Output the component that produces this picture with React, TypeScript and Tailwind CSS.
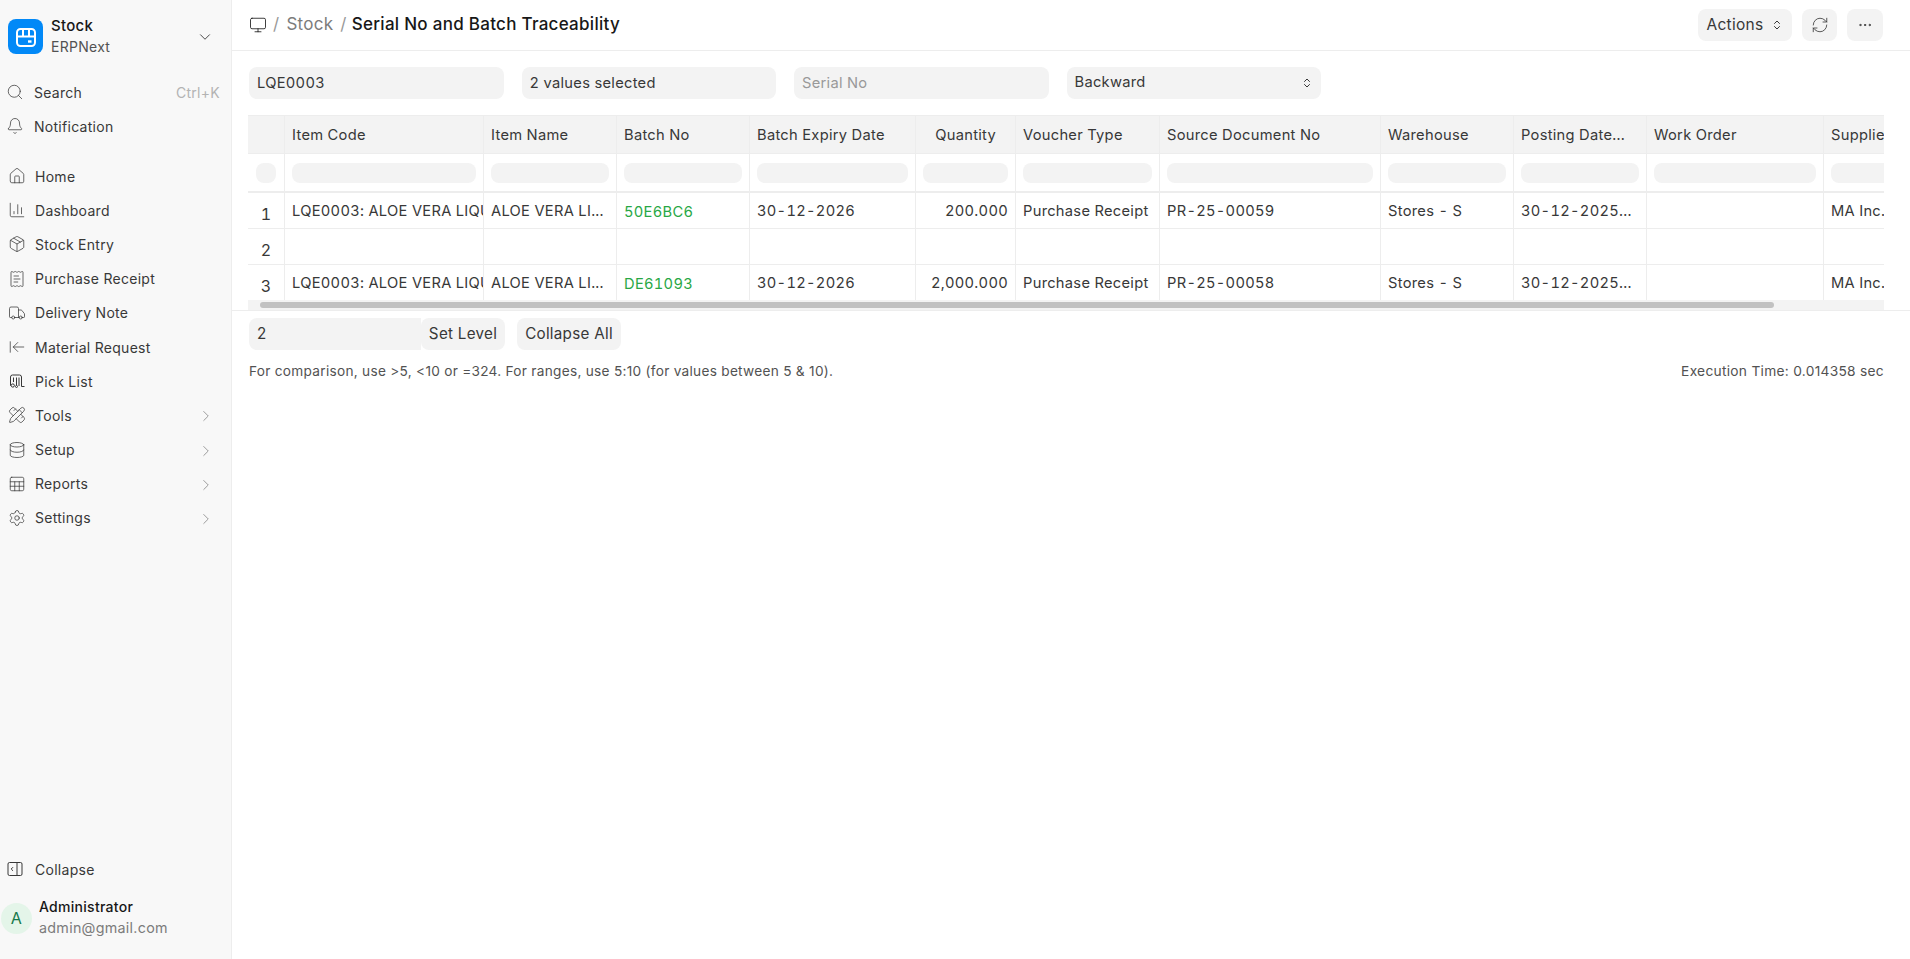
import React from "react";
import { Search, Bell, Home, ChartColumn, Package, ReceiptText, Truck, ArrowLeftToLine, PencilRuler, Database, Sheet, Settings, ChevronDown, ChevronRight, Monitor, RefreshCw, Ellipsis, ChevronsUpDown } from "lucide-react";

const F = "font-['Inter',sans-serif]";

function PickIcon() {
  return (
    <svg width="18" height="18" viewBox="0 0 18 18" fill="none" stroke="currentColor" strokeWidth="1">
      <path d="M3 13.5H2.5V5a2 2 0 0 1 2-2h7a2 2 0 0 1 2 2v9.5h3" />
      <path d="M5.5 5.5v4.5M8.5 5.5v8M11 5.5v8.5" />
      <circle cx="4.8" cy="13.5" r="1.6" />
      <circle cx="8.5" cy="14.5" r="1" />
    </svg>
  );
}

function CollapseIcon() {
  return (
    <svg width="18" height="18" viewBox="0 0 18 18" fill="none" stroke="currentColor" strokeWidth="1">
      <rect x="2" y="2.5" width="14" height="13" rx="1.5" />
      <path d="M11 2.5v13" />
      <path d="M7 7.2 5.2 9 7 10.8" />
    </svg>
  );
}

const side: [React.ReactNode, string, boolean][] = [
  [<Home size={18} strokeWidth={1} />, "Home", false],
  [<ChartColumn size={18} strokeWidth={1} />, "Dashboard", false],
  [<Package size={18} strokeWidth={1} />, "Stock Entry", false],
  [<ReceiptText size={18} strokeWidth={1} />, "Purchase Receipt", false],
  [<Truck size={18} strokeWidth={1} />, "Delivery Note", false],
  [<ArrowLeftToLine size={18} strokeWidth={1} />, "Material Request", false],
  [<PickIcon />, "Pick List", false],
  [<PencilRuler size={18} strokeWidth={1} />, "Tools", true],
  [<Database size={18} strokeWidth={1} />, "Setup", true],
  [<Sheet size={18} strokeWidth={1} />, "Reports", true],
  [<Settings size={18} strokeWidth={1} />, "Settings", true],
];
const cols = ["", "Item Code", "Item Name", "Batch No", "Batch Expiry Date", "Quantity", "Voucher Type", "Source Document No", "Warehouse", "Posting Date...", "Work Order", "Supplier"];
const row1 = ["1", "LQE0003: ALOE VERA LIQUID", "ALOE VERA LI...", "50E6BC6", "30-12-2026", "200.000", "Purchase Receipt", "PR-25-00059", "Stores - S", "30-12-2025...", "", "MA Inc."];
const row2 = ["2", "", "", "", "", "", "", "", "", "", "", ""];
const row3 = ["3", "LQE0003: ALOE VERA LIQUID", "ALOE VERA LI...", "DE61093", "30-12-2026", "2,000.000", "Purchase Receipt", "PR-25-00058", "Stores - S", "30-12-2025...", "", "MA Inc."];
const grid = "grid grid-cols-[37px_199px_133px_133px_166px_100px_144px_221px_133px_133px_177px_133px] w-[1809px] text-[14.7px] tabular-nums";

function Row({ r, h }: { r: string[]; h: string }) {
  return (
    <div className={`${grid} ${h} border-b border-[#ededed]`}>
      {r.map((c, i) => (
        <div key={i} className={`border-r border-[#ededed] px-[7px] flex items-center overflow-hidden whitespace-nowrap ${i === 0 ? "justify-center text-[16px] pt-[6px]" : i === 3 ? "text-[#28a745] pt-[3px]" : "pt-[2px]"} ${i === 5 ? "justify-end" : ""}`}>
          {c}
        </div>
      ))}
    </div>
  );
}

function Filter({ children, muted }: { children: React.ReactNode; muted?: boolean }) {
  return <div className={`w-[254.5px] h-[32px] rounded-lg bg-[#f3f3f3] px-2 flex items-center text-[14.7px] tabular-nums ${muted ? "text-[#999999]" : "text-[#383838]"}`}>{children}</div>;
}

export default function App() {
  return (
    <div className={`${F} flex h-[959px] w-[1910px] overflow-hidden bg-white text-[14px] tracking-[0.02em] text-[#383838]`}>
      <aside className="w-[232px] shrink-0 h-full bg-[#f8f8f8] border-r border-[#ededed] flex flex-col">
        <div className="flex items-center pl-2 pr-[17px] pt-[18px]">
          <div className="w-[35px] h-[35px] rounded-lg bg-[#0289f7] flex items-center justify-center">
            <svg width="24" height="24" viewBox="0 0 24 24" fill="none" stroke="white" strokeWidth="2">
              <rect x="3" y="4" width="18" height="17" rx="3.5" />
              <path d="M3 11.5h18M9 4.5v7M15 4.5v7" />
              <path d="M14 16.5h3.5" strokeWidth="2.4" />
            </svg>
          </div>
          <div className="ml-2 flex flex-col flex-1">
            <span className="text-[15px] font-medium text-[#171717] leading-[16px]">Stock</span>
            <span className="text-[14px] text-[#525252] leading-[16px] mt-[5px]">ERPNext</span>
          </div>
          <ChevronDown size={18} strokeWidth={1.2} className="text-[#383838]" />
        </div>
        <div className="mt-[20px] flex flex-col">
          <div className="h-[34px] flex items-center pl-[6px] pr-[11px]">
            <Search size={18} strokeWidth={1} />
            <span className="ml-[10px] flex-1">Search</span>
            <span className="text-[#b3b3b3]">Ctrl+K</span>
          </div>
          <div className="h-[34px] flex items-center pl-[6px] pr-3">
            <Bell size={18} strokeWidth={1} />
            <span className="ml-[10px]">Notification</span>
          </div>
        </div>
        <div className="mt-[16px] flex flex-col">
          {side.map(([ic, t, ch]) => (
            <div key={t} className="h-[34.2px] flex items-center pl-[8px] pr-[16px]">
              {ic}
              <span className="ml-[9px] flex-1">{t}</span>
              {ch && <ChevronRight size={18} strokeWidth={1} className="text-[#7c7c7c] mt-[2px]" />}
            </div>
          ))}
        </div>
        <div className="mt-auto flex items-center h-[34px] pl-[6px]">
          <CollapseIcon />
          <span className="ml-[11px]">Collapse</span>
        </div>
        <div className="flex items-center pl-px pt-[13px] pb-[22px] h-[73px]">
          <div className="w-[31px] h-[31px] rounded-full bg-[#e4f5e9] text-[#16794c] flex items-center justify-center text-[16px]">A</div>
          <div className="ml-[7px] flex flex-col -mt-[2px]">
            <span className="text-[#171717] font-medium leading-[16px]">Administrator</span>
            <span className="text-[#7c7c7c] text-[14.3px] leading-[16px] mt-[5px]">admin@gmail.com</span>
          </div>
        </div>
      </aside>
      <main className="flex-1 min-w-0 flex flex-col">
        <header className="h-[51px] shrink-0 border-b border-[#ededed] flex items-center pl-[17px] pr-[16px] pb-[1px]">
          <Monitor size={18} strokeWidth={1.1} className="text-[#171717]" />
          <span className="ml-[6px] text-[#999999] text-[17px]">/</span>
          <span className="ml-[7px] text-[#7c7c7c] text-[17px]">Stock</span>
          <span className="ml-[7px] text-[#999999] text-[17px]">/</span>
          <span className="ml-[5px] text-[#171717] text-[17px] font-medium">Serial No and Batch Traceability</span>
          <div className="ml-auto mr-[11px] flex items-center gap-[10px]">
            <button className="h-[32px] w-[94px] rounded-lg bg-[#f3f3f3] flex items-center justify-center gap-2 text-[15.5px]">Actions<ChevronsUpDown size={12} /></button>
            <button className="h-[32px] w-[35px] rounded-lg bg-[#f3f3f3] flex items-center justify-center"><RefreshCw size={18} strokeWidth={1.1} /></button>
            <button className="h-[32px] w-[36px] rounded-lg bg-[#f3f3f3] flex items-center justify-center"><Ellipsis size={16} strokeWidth={1.5} /></button>
          </div>
        </header>
        <div className="flex gap-[18px] pl-[17px] mt-[16px]">
          <Filter>LQE0003</Filter>
          <Filter>2 values selected</Filter>
          <Filter muted>Serial No</Filter>
          <Filter><span className="flex-1 -mt-[2px]">Backward</span><ChevronsUpDown size={12} /></Filter>
        </div>
        <div className="mt-[16px] ml-[16px] w-[1636px] overflow-hidden h-[195px] flex flex-col">
          <div className={`${grid} h-[39px] bg-[#f3f3f3] border-y border-[#ededed] shrink-0`}>
            {cols.map((c, i) => (
              <div key={i} className={`border-r border-[#ededed] pl-[7px] flex items-center whitespace-nowrap overflow-hidden pt-[2px] ${i === 5 ? "justify-end pr-[19px]" : "pr-[7px]"}`}>{c}</div>
            ))}
          </div>
          <div className={`${grid} h-[39px] border-b-2 border-[#ededed] shrink-0`}>
            {cols.map((c, i) => (
              <div key={i} className="border-r border-[#ededed] px-[7px] flex items-center">
                <div className={`h-[20px] rounded-lg bg-[#f3f3f3] ${i === 0 ? "w-[20px] mx-auto" : "w-full"}`} />
              </div>
            ))}
          </div>
          <Row r={row1} h="h-[36px] shrink-0" />
          <Row r={row2} h="h-[36px] shrink-0" />
          <Row r={row3} h="h-[36px] shrink-0" />
          <div className="h-[10px] bg-[#f3f3f3] shrink-0 -mt-px flex items-center pl-[12px]">
            <div className="h-[6px] w-[1514px] rounded-full bg-[#c1c1c1]" />
          </div>
        </div>
        <div className="border-t border-[#ededed] pl-[17px] pr-[26px] pt-[7px]">
          <div className="flex items-center text-[15.2px]">
            <div className="w-[172px] h-[32px] bg-[#f3f3f3] rounded-l-lg px-2 flex items-center">2</div>
            <button className="w-[84px] h-[32px] bg-[#f3f3f3] rounded-lg">Set Level</button>
            <button className="ml-[12px] w-[104px] h-[32px] bg-[#f3f3f3] rounded-lg">Collapse All</button>
          </div>
          <div className="mt-[11px] flex justify-between text-[13.65px] text-[#525252]">
            <span>For comparison, use &gt;5, &lt;10 or =324. For ranges, use 5:10 (for values between 5 &amp; 10).</span>
            <span className="text-[13.75px]">Execution Time: 0.014358 sec</span>
          </div>
        </div>
      </main>
    </div>
  );
}
